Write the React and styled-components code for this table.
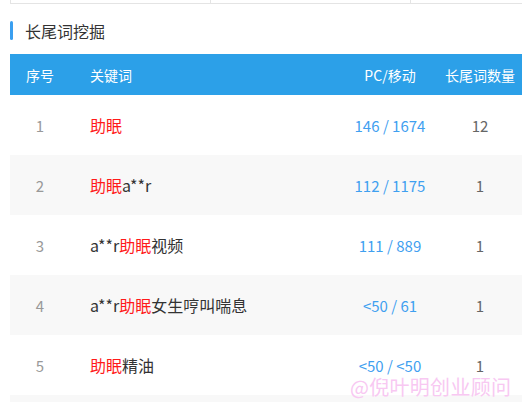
import React from "react";
import styled, { createGlobalStyle } from "styled-components";

const Global = createGlobalStyle`
  html, body { margin: 0; padding: 0; background: #fff; }
  body { font-family: "Noto Sans CJK SC", "Noto Sans", sans-serif; overflow: hidden; }
`;

const Page = styled.div`
  position: relative;
  width: 522px;
  height: 402px;
  overflow: hidden;
  padding-left: 10px;
  box-sizing: border-box;
`;

const TopBox = styled.div`
  display: grid;
  grid-template-columns: 200px 200px 200px;
  height: 3px;
  border-bottom: 1px solid #e4e4e4;
`;

const TopCell = styled.div`
  border-left: 1px solid #e4e4e4;
`;

const Title = styled.div`
  display: flex;
  align-items: center;
  gap: 12px;
  margin-top: 17px;
  height: 19px;
  font-size: 16px;
  color: #333;
`;

const TitleBar = styled.span`
  width: 3px;
  height: 19px;
  border-radius: 2px;
  background: #3a9ff0;
`;

const Table = styled.div`
  margin-top: 14px;
  font-size: 14px;
`;

const Row = styled.div`
  display: grid;
  grid-template-columns: 60px 1fr 100px 80px;
  padding-right: 2px;
  align-items: center;
  height: ${(p) => (p.$head ? 41 : 60)}px;
  background: ${(p) => (p.$head ? "#2ca0e8" : p.$alt ? "#f8f8f8" : "#fff")};
  color: ${(p) => (p.$head ? "#fff" : "#333")};
`;

const Cell = styled.div`
  text-align: ${(p) => p.$align || "center"};
  padding-left: ${(p) => (p.$align === "left" ? "20px" : "0")};
  color: ${(p) => p.$color || "inherit"};
  font-size: ${(p) => p.$size || 14}px;
  white-space: nowrap;
`;

const Hl = styled.span`
  color: #ff1a1a;
`;

const Watermark = styled.div`
  position: absolute;
  left: 350px;
  top: 372px;
  font-size: 20px;
  color: #f8c8f2;
  letter-spacing: 0.3px;
  white-space: nowrap;
`;

const rows = [
  { k: [["h", "助眠"]], pc: "146 / 1674", n: "12" },
  { k: [["h", "助眠"], ["t", "a**r"]], pc: "112 / 1175", n: "1" },
  { k: [["t", "a**r"], ["h", "助眠"], ["t", "视频"]], pc: "111 / 889", n: "1" },
  { k: [["t", "a**r"], ["h", "助眠"], ["t", "女生哼叫喘息"]], pc: "<50 / 61", n: "1" },
  { k: [["h", "助眠"], ["t", "精油"]], pc: "<50 / <50", n: "1" },
  { k: [], pc: "", n: "" },
];

export default function App() {
  return (
    <Page>
      <Global />
      <TopBox>
        <TopCell />
        <TopCell />
        <TopCell />
      </TopBox>
      <Title>
        <TitleBar />
        长尾词挖掘
      </Title>
      <Table>
        <Row $head>
          <Cell>序号</Cell>
          <Cell $align="left">关键词</Cell>
          <Cell>PC/移动</Cell>
          <Cell>长尾词数量</Cell>
        </Row>
        {rows.map((r, i) => (
          <Row key={i} $alt={i % 2 === 1}>
            <Cell $color="#999" $size={15}>{r.k.length ? i + 1 : ""}</Cell>
            <Cell $align="left" $size={16}>
              {r.k.map(([t, s], j) => (t === "h" ? <Hl key={j}>{s}</Hl> : <span key={j}>{s}</span>))}
            </Cell>
            <Cell $color="#3fa0f0" $size={15}>{r.pc}</Cell>
            <Cell $color="#666" $size={15}>{r.n}</Cell>
          </Row>
        ))}
      </Table>
      <Watermark>@倪叶明创业顾问</Watermark>
    </Page>
  );
}
